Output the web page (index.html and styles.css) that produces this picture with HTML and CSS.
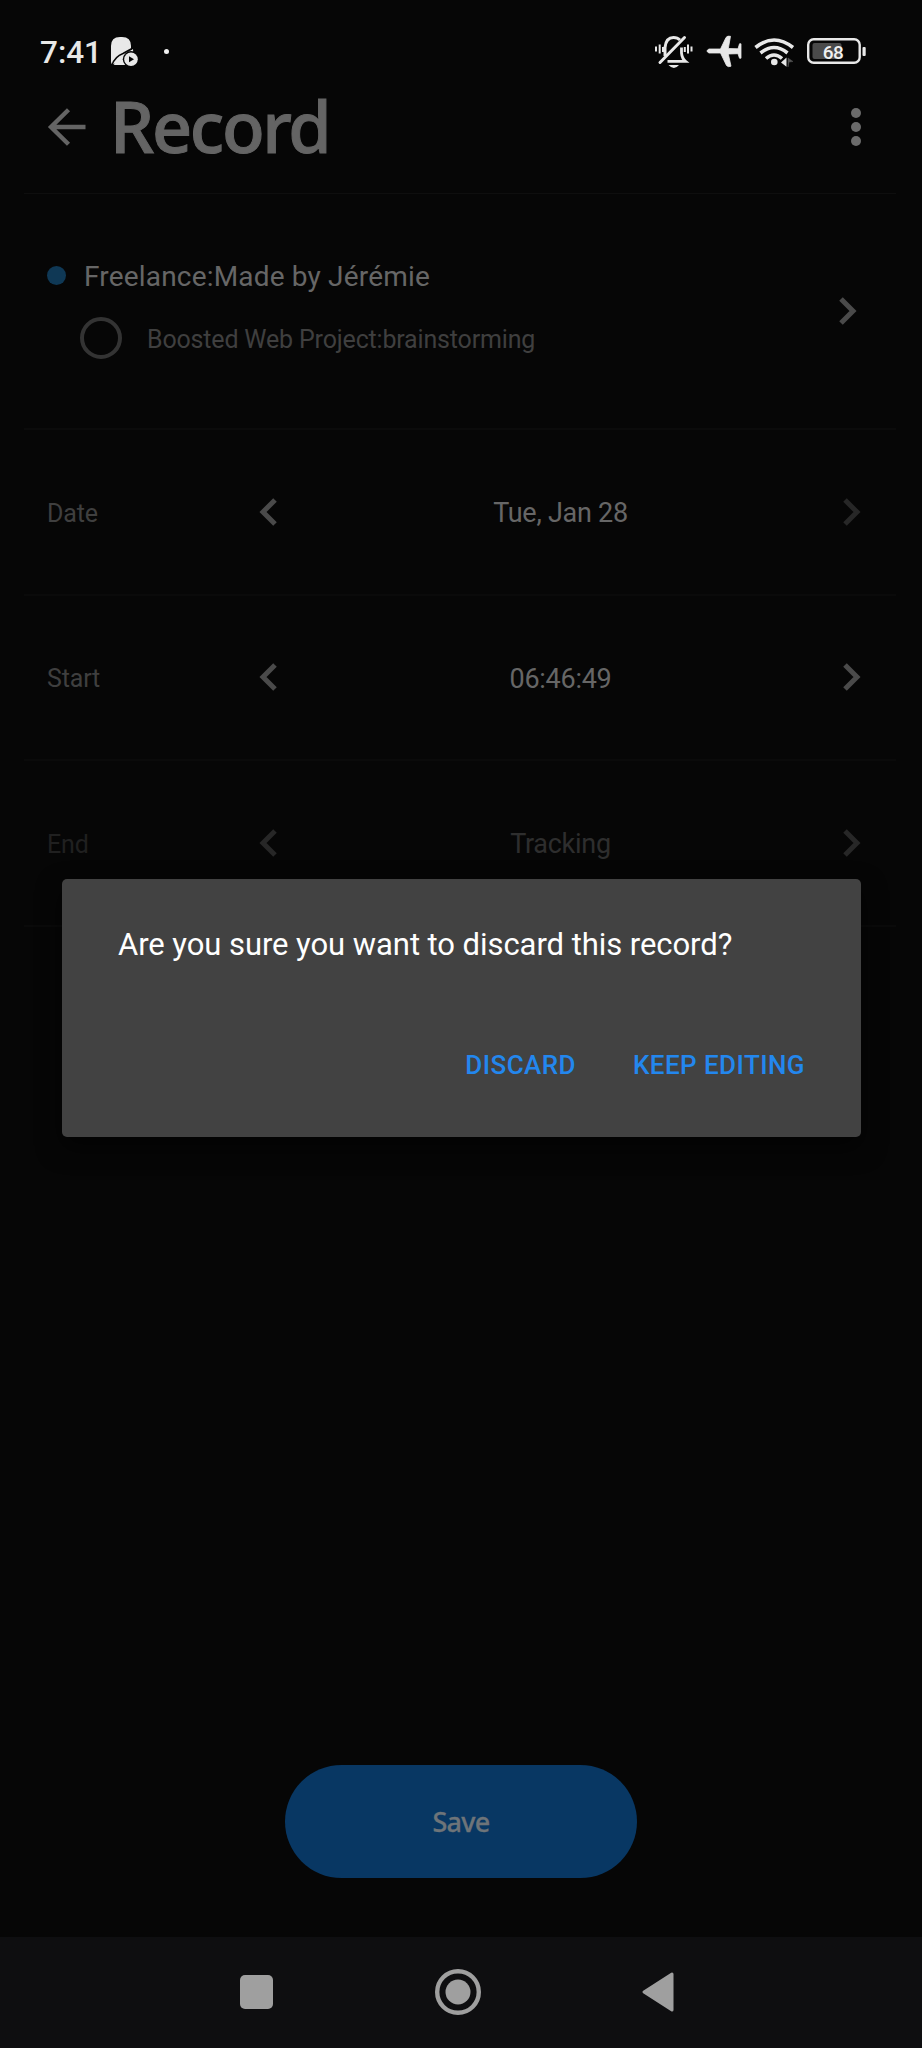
FILE: index.html
```html
<!DOCTYPE html>
<html lang="en">
<head>
<meta charset="utf-8">
<title>Record</title>
<link rel="stylesheet" href="styles.css">
</head>
<body>
<div class="screen">
  <div class="status">
    <span class="time">7:41</span>
    <svg class="notif" width="28" height="30" viewBox="0 0 28 30">
      <path d="M0 9Q0 0 9 0h2q9 0 9 9v3L3 27q-3 1-3-2z" fill="#e8e8e8"/>
      <path d="M3 28Q4 20 13 17L22 12l1 16z" fill="#e8e8e8"/>
      <path d="M1 28Q4 19.500 12 16.500L21 11.500" fill="none" stroke="#060606" stroke-width="1.500"/>
      <circle cx="20" cy="22.300" r="8.200" fill="#060606"/>
      <circle cx="20" cy="22.300" r="6.800" fill="#e8e8e8"/>
      <path d="M18 19.300v6l5-3z" fill="#060606"/>
    </svg>
    <span class="dot"></span>
    <svg class="sysicons" width="214" height="36" viewBox="652 34 214 36" fill="none" stroke="#e8e8e8">
      <path d="M656 46.500v5M659.700 44.500v9M663 47v5M684.800 47v5M688 44.500v9M691.500 46.500v5" stroke-width="2"/>
      <path d="M665 56V47.500Q666 37.500 673.500 37.500q4 0 6.500 2.500" stroke-width="3"/>
      <path d="M681.500 47.500V53q.500 5.500 4 8.300H667.500" stroke-width="2.800"/>
      <path d="M660 62.500L684.500 37.500" stroke-width="3" stroke-linecap="round"/>
      <path d="M668.500 65h10.500q-5 6-10.500 0z" stroke="none" fill="#e8e8e8"/>
      <path d="M709 49h11.500l5.500-11.500q1.500-2 4.500-1.200L728.300 48.500l9.700.300 1.500-5h1.500v14.400h-1.500l-1.500-4.500-9.700.300 2.700 12.200q-3 1.200-4.500-.700L720.500 53H709q-4-2 0-4z" stroke="#e8e8e8" stroke-width=".8" fill="#e8e8e8"/>
      <path d="M755.500 47.500Q774 32.500 793 47.500M760.500 53Q774 42 787.500 53M766 58.500Q774 51.500 782 58.500" stroke-width="3.600"/>
      <circle cx="774.300" cy="62" r="3.300" stroke="none" fill="#e8e8e8"/>
      <path d="M781 62.500l5.500-5v9.300z" stroke="none" fill="#e8e8e8"/>
      <path d="M788 58v9l1-5 4-.500z" stroke="#555" fill="#555" stroke-width=".5"/>
      <rect x="808.200" y="39.200" width="51.500" height="23.500" rx="5.500" stroke-width="2.400"/>
      <rect x="812.500" y="43" width="29" height="16" rx="2" fill="#4a4a4a" stroke="none"/>
      <rect x="862.500" y="47" width="3.200" height="9" rx="1" fill="#e8e8e8" stroke="none"/>
      <text class="battery" x="833" y="58.800" text-anchor="middle">68</text>
    </svg>
  </div>
  <header class="header">
    <svg class="back" width="40" height="40" viewBox="0 0 40 40"><path d="M38.500 20H4M21.500 2.700L4 20l17.500 17.300" fill="none" stroke="#646464" stroke-width="4.400"/></svg>
    <h1 class="title">Record</h1>
    <svg class="more" width="12" height="40" viewBox="0 0 12 40" fill="#6b6b6b"><circle cx="6" cy="6" r="5"/><circle cx="6" cy="20" r="5"/><circle cx="6" cy="34" r="5"/></svg>
  </header>
  <section class="task">
    <div class="names">
      <div class="project"><span class="bullet"></span><span class="pname">Freelance:Made by Jérémie</span></div>
      <div class="sub"><span class="ring"></span><span class="sname">Boosted Web Project:brainstorming</span></div>
    </div>
    <svg class="chev open" width="18" height="28" viewBox="0 0 18 28"><path d="M2 2l12 12L2 26"/></svg>
  </section>
  <section class="row">
    <span class="label">Date</span>
    <svg class="chev" width="18" height="28" viewBox="0 0 18 28"><path d="M16 2L4 14l12 12"/></svg>
    <span class="value">Tue, Jan 28</span>
    <svg class="chev dim" width="18" height="28" viewBox="0 0 18 28"><path d="M2 2l12 12L2 26"/></svg>
  </section>
  <section class="row">
    <span class="label">Start</span>
    <svg class="chev" width="18" height="28" viewBox="0 0 18 28"><path d="M16 2L4 14l12 12"/></svg>
    <span class="value">06:46:49</span>
    <svg class="chev" width="18" height="28" viewBox="0 0 18 28"><path d="M2 2l12 12L2 26"/></svg>
  </section>
  <section class="row disabled">
    <span class="label">End</span>
    <svg class="chev dim" width="18" height="28" viewBox="0 0 18 28"><path d="M16 2L4 14l12 12"/></svg>
    <span class="value">Tracking</span>
    <svg class="chev dim" width="18" height="28" viewBox="0 0 18 28"><path d="M2 2l12 12L2 26"/></svg>
  </section>
  <div class="footer"><button class="save">Save</button></div>
  <nav class="nav">
    <span class="recent"></span>
    <svg class="home" width="46" height="46" viewBox="0 0 46 46"><circle cx="23" cy="23" r="20.800" fill="none" stroke="#9f9f9f" stroke-width="4.400"/><circle cx="23" cy="23" r="12.500" fill="#9f9f9f"/></svg>
    <svg class="prev" width="32" height="40" viewBox="0 0 32 40"><path d="M2 20L30 2v36z" fill="#9f9f9f" stroke="#9f9f9f" stroke-width="3" stroke-linejoin="round"/></svg>
  </nav>
  <div class="dialog" role="alertdialog">
    <p class="message">Are you sure you want to discard this record?</p>
    <div class="actions"><button class="action discard">DISCARD</button><button class="action keep">KEEP EDITING</button></div>
  </div>
</div>
</body>
</html>
```
FILE: styles.css
```css
* { box-sizing: border-box; }
body { margin: 0; background: #060606; }
button { border: 0; background: none; padding: 0; margin: 0; }
svg { display: block; flex: none; }
.screen {
  position: relative;
  display: flex;
  flex-direction: column;
  width: 922px;
  height: 2048px;
  overflow: hidden;
  background: #060606;
  font-family: Roboto, "Liberation Sans", sans-serif;
  white-space: nowrap;
}
.status { display: flex; height: 80px; padding: 0 56px 0 40px; flex: none; }
.time { width: 71px; margin-top: 34px; font-size: 31.500px; font-weight: 500; line-height: 38px; color: #e8e8e8; }
.notif { margin-top: 37px; }
.dot { width: 5px; height: 5px; margin: 49px 0 0 25px; border-radius: 50%; background: #f0f0f0; }
.sysicons { margin: 34px 0 0 auto; }
.battery { font: 500 19px Roboto, sans-serif; letter-spacing: -0.5px; fill: #f0f0f0; stroke: none; }
.header {
  display: flex;
  align-items: center;
  height: 114px;
  margin: 0 26px 0 24px;
  padding: 0 34px 20px 23px;
  border-bottom: 1px solid #0e0e0e;
  flex: none;
}
.title {
  margin: -2px auto 0 23px;
  font: 500 70px/94px "Noto Sans", sans-serif;
  letter-spacing: -2.300px;
  color: #646464;
  -webkit-text-stroke: 1px #646464;
}
.task {
  display: flex;
  height: 236px;
  margin: 0 26px 0 24px;
  padding: 63px 39px 0 23px;
  border-bottom: 2px solid #0b0b0b;
  flex: none;
}
.project { display: flex; height: 37px; align-items: center; }
.bullet { width: 19px; height: 19px; margin-right: 18px; border-radius: 50%; background: #0f3855; }
.pname { padding-top: 2px; font-size: 28px; letter-spacing: 0.180px; color: #666; }
.sub { display: flex; align-items: center; margin: 23px 0 0 33px; }
.ring { width: 42px; height: 42px; margin-right: 25px; border: 4px solid #333; border-radius: 50%; }
.sname { padding-top: 2px; font-size: 25px; letter-spacing: -0.170px; color: #3f3f3f; }
.chev { fill: none; stroke: #4a4a4a; stroke-width: 5; }
.chev.dim { stroke: #272727; }
.chev.open { margin: 40px 0 0 auto; }
.row {
  display: flex;
  align-items: center;
  height: 165.500px;
  margin: 0 26px 0 24px;
  padding: 0 35px 0 23px;
  border-bottom: 2px solid #0a0a0a;
  flex: none;
}
.label { width: 212px; padding-top: 3px; font-size: 25px; letter-spacing: -0.150px; color: #3f3f3f; }
.value { flex: 1; padding: 3px 0 0 1px; font-size: 27px; letter-spacing: -0.270px; text-align: center; color: #666; }
.disabled .label { color: #202020; }
.disabled .value { color: #2e2e2e; }
.footer { flex: 1; display: flex; align-items: flex-end; justify-content: center; padding-bottom: 59px; }
.save {
  width: 352px;
  height: 113px;
  border-radius: 57px;
  background: #083763;
  color: #6e7479;
  font: 500 27px "Noto Sans", sans-serif;
  letter-spacing: -0.700px;
  -webkit-text-stroke: 0.300px #6e7479;
}
.nav { display: flex; align-items: center; height: 111px; padding: 0 0 1px 240px; background: #0e0e10; flex: none; }
.recent { width: 33px; height: 34px; border-radius: 5px; background: #9f9f9f; }
.home { margin-left: 162px; }
.prev { margin-left: 161px; }
.dialog {
  position: absolute;
  left: 61.500px;
  top: 879px;
  width: 799.500px;
  height: 258px;
  padding: 47px 56px 0 56.500px;
  border-radius: 5px;
  background: #424242;
  box-shadow: 0 10px 24px rgba(0, 0, 0, 0.6);
}
.message { margin: 0; font-size: 31px; line-height: 38px; letter-spacing: -0.060px; color: #fff; }
.actions { display: flex; justify-content: flex-end; gap: 57px; margin-top: 85px; }
.action { font: 500 26px/32px Roboto, sans-serif; letter-spacing: 0.430px; color: #2387ee; }
```
